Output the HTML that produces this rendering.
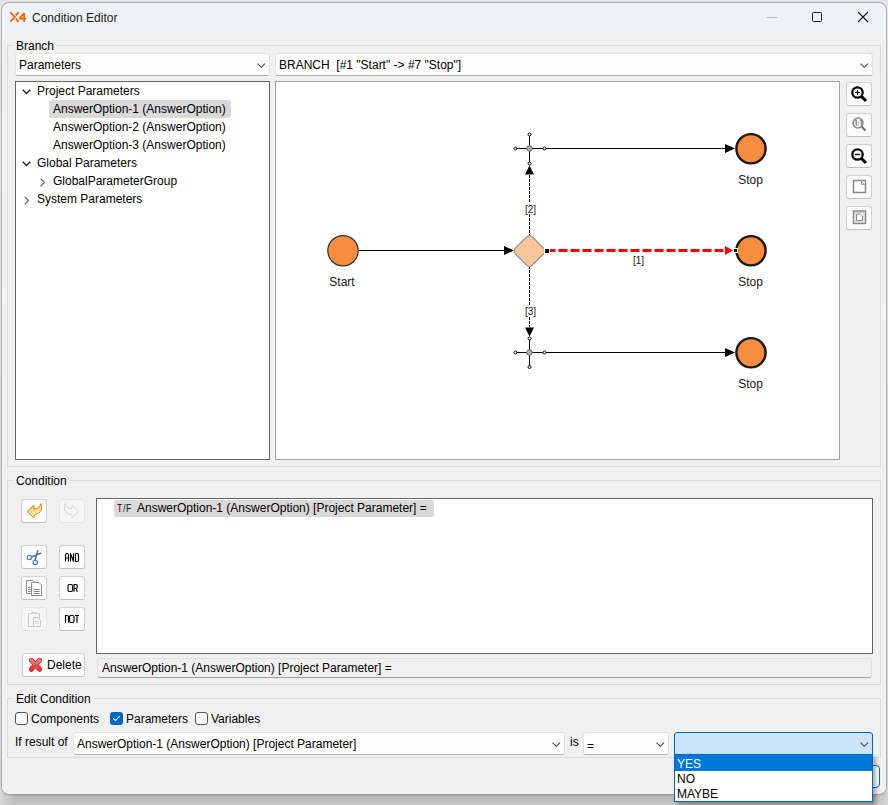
<!DOCTYPE html>
<html><head><meta charset="utf-8">
<style>
*{box-sizing:border-box;margin:0;padding:0}
html,body{width:888px;height:805px;overflow:hidden;background:linear-gradient(#e7e7e7 0,#e6e6e6 60px,#d6d6d6 760px);font-family:"Liberation Sans",sans-serif;font-size:12px;color:#000;position:relative}
.a{position:absolute}
.t{position:absolute;white-space:pre;line-height:14px;font-size:12px}
.grp{position:absolute;border:1px solid #dcdcdc}
.combo{position:absolute;background:#fdfdfd;border:1px solid #e2e2e2;border-bottom-color:#b0b0b0;border-radius:3px}
.chev{position:absolute}
.btn{position:absolute;background:#fdfdfd;border:1px solid #d0d0d0;border-bottom-color:#c0c0c0;border-radius:3px}
.btn.dis{background:#f6f6f6;border-color:#e4e4e4}
</style></head><body>
<!-- shadow & window -->
<div class="a" style="left:0;top:794px;width:888px;height:11px;background:linear-gradient(#a4a4a4,#b8b8b8 3px,#c0c0c0 8px,#c2c2c2)"></div>
<div class="a" style="left:0;top:794px;width:16px;height:11px;background:linear-gradient(90deg,#d6d6d6,rgba(214,214,214,0))"></div>
<div class="a" style="left:872px;top:794px;width:16px;height:11px;background:linear-gradient(90deg,rgba(214,214,214,0),#d6d6d6)"></div>
<div class="a" style="left:1px;top:2px;width:886px;height:793px;border:1px solid #acacac;border-bottom-color:#9a9a9a;border-radius:8px;background:#f0f0f0;overflow:hidden;box-shadow:inset 0 0 0 1px rgba(255,255,255,0.55)">
  <div class="a" style="left:1px;top:1px;width:882px;height:29px;background:#eef2f7"></div>
</div>
<!-- title -->
<svg class="a" style="left:0;top:0" width="40" height="30"><g fill="none" stroke="#f5600f" stroke-width="1.8"><path d="M10.3 12.3L15 17L10.3 21.7"/><path d="M18.6 12.3L15.8 15.4M15.8 18.6L18.6 21.7"/><path d="M24.2 21.9V13.2L19.5 18.6H26.2" stroke-linejoin="bevel"/></g></svg>
<div class="t" style="left:32px;top:11px;color:#1a1a1a">Condition Editor</div>
<div class="a" style="left:767px;top:17px;width:10px;height:1px;background:#b8b8b8"></div>
<div class="a" style="left:812px;top:12px;width:10px;height:10px;border:1px solid #1a1a1a;border-radius:1.5px"></div>
<svg class="a" style="left:857px;top:11px" width="12" height="12"><path d="M1 1L11 11M11 1L1 11" stroke="#1a1a1a" stroke-width="1.1"/></svg>

<!-- Branch group -->
<div class="grp" style="left:7px;top:45px;width:874px;height:422px"></div>
<div class="t" style="left:14px;top:39px;background:#f0f0f0;padding:0 2px">Branch</div>
<div class="combo" style="left:15px;top:53px;width:255px;height:23px"></div>
<div class="t" style="left:19px;top:58px">Parameters</div>
<svg class="chev" style="left:257px;top:62.5px" width="9" height="5"><path d="M0.6 0.6L4.3 4.3L8 0.6" fill="none" stroke="#4a4a4a" stroke-width="1.1"/></svg>
<div class="combo" style="left:275px;top:53px;width:598px;height:23px"></div>
<div class="t" style="left:279px;top:58px">BRANCH  [#1 "Start" -&gt; #7 "Stop"]</div>
<svg class="chev" style="left:860px;top:62.5px" width="9" height="5"><path d="M0.6 0.6L4.3 4.3L8 0.6" fill="none" stroke="#4a4a4a" stroke-width="1.1"/></svg>

<!-- tree -->
<div class="a" style="left:15px;top:81px;width:255px;height:379px;background:#fff;border:1px solid #646464"></div>
<div class="a" style="left:49px;top:100px;width:182px;height:18px;background:#d9d9d9;border-radius:3px"></div>
<svg class="a" style="left:22px;top:89px" width="9" height="6"><path d="M0.7 0.7L4.5 4.5L8.3 0.7" fill="none" stroke="#222" stroke-width="1.4"/></svg>
<div class="t" style="left:37px;top:84px">Project Parameters</div>
<div class="t" style="left:53px;top:102px">AnswerOption-1 (AnswerOption)</div>
<div class="t" style="left:53px;top:120px">AnswerOption-2 (AnswerOption)</div>
<div class="t" style="left:53px;top:138px">AnswerOption-3 (AnswerOption)</div>
<svg class="a" style="left:22px;top:161px" width="9" height="6"><path d="M0.7 0.7L4.5 4.5L8.3 0.7" fill="none" stroke="#222" stroke-width="1.4"/></svg>
<div class="t" style="left:37px;top:156px">Global Parameters</div>
<svg class="a" style="left:40px;top:178px" width="6" height="9"><path d="M0.6 0.6L4.5 4.5L0.6 8.4" fill="none" stroke="#666" stroke-width="1.2"/></svg>
<div class="t" style="left:53px;top:174px">GlobalParameterGroup</div>
<svg class="a" style="left:24px;top:196px" width="6" height="9"><path d="M0.6 0.6L4.5 4.5L0.6 8.4" fill="none" stroke="#666" stroke-width="1.2"/></svg>
<div class="t" style="left:37px;top:192px">System Parameters</div>

<!-- diagram -->
<div class="a" style="left:275px;top:81px;width:565px;height:379px;background:#fff;border:1px solid #a0a0a8"></div>


<!-- diagram svg -->
<svg class="a" style="left:0;top:0;z-index:5" width="888" height="805">
 <g fill="none" stroke="#000" stroke-width="1">
  <path d="M359 250.5H504"/>
  <path d="M515.5 148.5H725"/>
  <path d="M529.5 134.5V163.5"/>
  <path d="M515.5 352.5H725"/>
  <path d="M529.5 338.5V367"/>
  <path d="M529.5 175V202" stroke-dasharray="3 1"/>
  <path d="M529.5 214V236" stroke-dasharray="3 1"/>
  <path d="M529.5 266V305" stroke-dasharray="3 1"/>
  <path d="M529.5 317V327" stroke-dasharray="3 1"/>
 </g>
 <path d="M546.5 250.5H725" stroke="#f00" stroke-width="3" stroke-dasharray="9 3"/>
 <g fill="#000">
  <path d="M504 246L514 250.5L504 255Z"/>
  <path d="M725 144L735 148.5L725 153Z"/>
  <path d="M725 348L735 352.5L725 357Z"/>
  <path d="M525 174.5L529.5 165.5L534 174.5Z"/>
  <path d="M525 327.5L529.5 336.5L534 327.5Z"/>
   </g>
 <path d="M725 246L733 250.5L725 255Z" fill="#f00"/>
 <g fill="#fff" stroke="#000" stroke-width="1">
  <circle cx="529.5" cy="134.5" r="1.5"/><circle cx="515.5" cy="148.5" r="1.5"/><circle cx="544.5" cy="148.5" r="1.5"/><circle cx="529.5" cy="163.5" r="1.5"/>
  <circle cx="529.5" cy="338.5" r="1.5"/><circle cx="515.5" cy="352.5" r="1.5"/><circle cx="544.5" cy="352.5" r="1.5"/><circle cx="529.5" cy="367" r="1.5"/>
 </g>
 <g fill="#aaa" stroke="#666" stroke-width="1">
  <circle cx="529.5" cy="148.5" r="2.8"/><circle cx="529.5" cy="352.5" r="2.8"/>
 </g>
 <rect x="517.5" y="239" width="24" height="24" rx="4" transform="rotate(45 529.5 251)" fill="#f8c49a" stroke="#8c8c8c" stroke-width="1.1"/>
 <rect x="544.5" y="248.5" width="5" height="5" fill="#000" stroke="#fff" stroke-width="1"/>
 <circle cx="343" cy="250.75" r="15.2" fill="#f68d3f" stroke="#333" stroke-width="1.2"/>
 <g fill="#f68d3f" stroke="#1a1a1a" stroke-width="2.4">
  <circle cx="751" cy="148.75" r="14.6"/><circle cx="751" cy="250.75" r="14.6"/><circle cx="751" cy="352.75" r="14.6"/>
 </g>
 <rect x="733.5" y="248.5" width="4" height="4" fill="#000" stroke="#fff" stroke-width="1"/>
 <g font-family="Liberation Sans" font-size="12" fill="#1a1a1a" text-anchor="middle">
  <text x="342" y="285.5">Start</text>
  <text x="750.5" y="183.5">Stop</text>
  <text x="750.5" y="285.5">Stop</text>
  <text x="750.5" y="387.5">Stop</text>
 </g>
 <g font-family="Liberation Sans" font-size="10" fill="#222" text-anchor="middle">
  <text x="530.5" y="213">[2]</text>
  <text x="530.5" y="315">[3]</text>
  <text x="638.5" y="264">[1]</text>
 </g>
</svg>

<!-- zoom buttons -->
<div class="btn" style="left:846px;top:82px;width:26px;height:24px"></div>
<div class="btn" style="left:846px;top:113px;width:26px;height:24px"></div>
<div class="btn" style="left:846px;top:144px;width:26px;height:24px"></div>
<div class="btn" style="left:846px;top:175px;width:26px;height:24px"></div>
<div class="btn" style="left:846px;top:206px;width:26px;height:24px"></div>
<svg class="a" style="left:0;top:0;z-index:5" width="888" height="805">
 <g fill="none" stroke="#000">
  <circle cx="857.5" cy="92.5" r="5.2" stroke-width="2.2"/>
  <path d="M861.5 96.5L866 101" stroke-width="3"/>
  <path d="M855 92.5H860M857.5 90V95" stroke-width="1.2"/>
  <circle cx="857.5" cy="154.5" r="5.2" stroke-width="2.2"/>
  <path d="M861.5 158.5L866 163" stroke-width="3"/>
  <path d="M855 154.5H860" stroke-width="1.4"/>
 </g>
 <g fill="none" stroke="#8a8a8a">
  <circle cx="858" cy="123" r="5" stroke-width="1.5" fill="#f4f4f4"/>
  <path d="M861.8 126.8L865.5 130.5" stroke-width="2" stroke="#6a6a6a"/>
 </g>
 <path d="M855.2 121L856.2 120.3V125.8M860.3 121L861.3 120.3V125.8M858.2 121.5V122.5M858.2 124.3V125.3" fill="none" stroke="#7a7a7a" stroke-width="1.1"/>
 <g fill="none" stroke="#8a8a8a" stroke-width="1">
  <rect x="853.5" y="180.5" width="12" height="12" stroke-width="1.5"/>
  <path d="M861.5 181.5V184.5H864.5M861.5 181.5L864.5 184.5" stroke="#9a9a9a"/>
  <rect x="853.5" y="211" width="12" height="12.5" stroke-width="1.5"/>
  <rect x="855" y="212.5" width="9" height="9.5" stroke="#c8c8c8"/>
  <path d="M856.5 214H860.5L862.5 216V220.5H856.5Z" stroke="#8a8a8a"/>
 </g>
</svg>

<!-- Condition group -->
<div class="grp" style="left:7px;top:480px;width:874px;height:205px"></div>
<div class="t" style="left:14px;top:474px;background:#f0f0f0;padding:0 2px">Condition</div>
<div class="btn" style="left:21px;top:499px;width:26px;height:24px"></div>
<div class="btn dis" style="left:59px;top:499px;width:26px;height:24px"></div>
<div class="btn" style="left:21px;top:545px;width:26px;height:24px"></div>
<div class="btn" style="left:59px;top:545px;width:26px;height:24px"></div>
<div class="btn" style="left:21px;top:576px;width:26px;height:24px"></div>
<div class="btn" style="left:59px;top:576px;width:26px;height:24px"></div>
<div class="btn dis" style="left:21px;top:607px;width:26px;height:24px"></div>
<div class="btn" style="left:59px;top:607px;width:26px;height:24px"></div>
<svg class="a" style="left:0;top:0;z-index:5" width="888" height="805">
 <defs><linearGradient id="gold" x1="0" y1="0" x2="0.3" y2="1"><stop offset="0" stop-color="#eeb443"/><stop offset="0.6" stop-color="#f8dc8a"/><stop offset="1" stop-color="#fff2c4"/></linearGradient>
 <linearGradient id="redx" x1="0" y1="0" x2="0" y2="1"><stop offset="0" stop-color="#f47e80"/><stop offset="1" stop-color="#dc3338"/></linearGradient></defs>
 <path d="M27.2 511.5L33.8 505.2L34.4 509C37.6 509 40 506.5 40.8 503.6C42.6 507.5 42.2 513.2 34.6 514.6L33.8 517.6Z" fill="url(#gold)" stroke="#c08c2c" stroke-width="1" stroke-linejoin="round"/>
 <path d="M27.2 511.5L33.8 505.2L34.4 509C37.6 509 40 506.5 40.8 503.6C42.6 507.5 42.2 513.2 34.6 514.6L33.8 517.6Z" transform="translate(106 0) scale(-1 1)" fill="#f8f8f8" stroke="#d2d2d2" stroke-width="1" stroke-linejoin="round"/>
 <g stroke="#5d7590" stroke-width="1.6" stroke-linecap="round"><path d="M31 557.2L40.5 553.2M34.8 561L37.8 550.8"/></g>
 <g fill="#fff" stroke="#3b78bd" stroke-width="1.1"><circle cx="29.4" cy="557.4" r="2.2"/><circle cx="35.2" cy="562.4" r="2.2"/></g>
 <g fill="#fff" stroke="#8e8e8e" stroke-width="1">
  <path d="M26.5 580.5H33L35 582.5V593.5H26.5Z"/>
  <path d="M31.5 582.5H39L41.5 585V595.5H31.5Z"/>
  <path d="M33.5 589.5H39.8M33.5 591.5H39.8M33.5 593.5H39.8M28 587.5H31M28 589.5H31M28 591.5H31" stroke="#8e8e8e"/>
 </g>
 <g fill="#f6f6f6" stroke="#c8c8c8" stroke-width="1">
  <path d="M28.5 613.5H39.5V626.5H28.5Z"/>
  <path d="M31.5 613.5V612.5H36.5V613.5"/>
  <path d="M33.5 617.5H38L40.5 620V626.5H33.5Z"/>
  <path d="M36 621.5H38.5M36 623.5H38.5"/>
 </g>
 <g fill="none" stroke="#000" stroke-width="1.15">
  <path d="M65.5 561.5V555Q65.5 553.5 67 553.5Q68.5 553.5 68.5 555V561.5M65.5 558H68.5"/>
  <path d="M70.5 561.5V553.5L73.5 561.5V553.5"/>
  <path d="M75.5 553.5V561.5H77Q78.5 561.5 78.5 560V555Q78.5 553.5 77 553.5H75.5"/>
  <path d="M69.5 584.5H71Q72.5 584.5 72.5 586V590Q72.5 591.5 71 591.5H69.5Q68 591.5 68 590V586Q68 584.5 69.5 584.5Z"/>
  <path d="M74 591.8V584.5H76Q77.3 584.5 77.3 586V587Q77.3 588.3 76 588.3H74M76 588.3L77.3 591.8"/>
  <path d="M65.5 622.8V615.5H67Q68.5 615.5 68.5 617V622.8"/>
  <path d="M71 615.5H72.5Q74 615.5 74 617V621Q74 622.5 72.5 622.5H71Q69.5 622.5 69.5 621V617Q69.5 615.5 71 615.5Z"/>
  <path d="M75 615.5H79M77 615.5V622.8"/>
 </g>
 <g stroke-linecap="round"><path d="M31.3 660.3L39.7 669.3M39.7 660.3L31.3 669.3" stroke="#cf3035" stroke-width="5"/><path d="M31.3 660.3L39.7 669.3M39.7 660.3L31.3 669.3" stroke="url(#redx)" stroke-width="3.2"/></g>
 <path d="M113.3 718.3L115.5 720.5L119.8 716.2" fill="none" stroke="#fff" stroke-width="1.1"/>
</svg>
<div class="a" style="left:96px;top:498px;width:777px;height:156px;background:#fff;border:1px solid #646464"></div>
<div class="a" style="left:114px;top:500px;width:320px;height:17px;background:#d9d9d9;border-radius:2px"></div>
<div class="t" style="left:117px;top:501px;font-size:11px;letter-spacing:0.8px;transform:scaleX(0.8);transform-origin:0 0;color:#111">T/F</div>
<div class="t" style="left:137px;top:501px">AnswerOption-1 (AnswerOption) [Project Parameter] =</div>
<div class="btn" style="left:22px;top:653px;width:63px;height:24px"></div>
<div class="t" style="left:47px;top:658px">Delete</div>
<div class="a" style="left:97px;top:658px;width:775px;height:20px;background:#f0f0f0;border:1px solid #e0e0e0;border-bottom-color:#a0a0a0;border-radius:3px"></div>
<div class="t" style="left:102px;top:661px">AnswerOption-1 (AnswerOption) [Project Parameter] =</div>

<!-- Edit Condition group -->
<div class="grp" style="left:7px;top:698px;width:874px;height:60px"></div>
<div class="t" style="left:14px;top:692px;background:#f0f0f0;padding:0 2px">Edit Condition</div>
<div class="a" style="left:15px;top:712px;width:13px;height:13px;border:1px solid #555;border-radius:3px;background:#fbfbfb"></div>
<div class="t" style="left:31px;top:712px">Components</div>
<div class="a" style="left:110px;top:712px;width:13px;height:13px;border-radius:3px;background:#0067c0"></div>
<div class="t" style="left:126px;top:712px">Parameters</div>
<div class="a" style="left:195px;top:712px;width:13px;height:13px;border:1px solid #555;border-radius:3px;background:#fbfbfb"></div>
<div class="t" style="left:211px;top:712px">Variables</div>
<div class="t" style="left:15px;top:735px">If result of</div>
<div class="combo" style="left:73px;top:732px;width:492px;height:23px"></div>
<div class="t" style="left:77px;top:737px">AnswerOption-1 (AnswerOption) [Project Parameter]</div>
<svg class="chev" style="left:552px;top:742px" width="9" height="5"><path d="M0.6 0.6L4.3 4.3L8 0.6" fill="none" stroke="#4a4a4a" stroke-width="1.1"/></svg>
<div class="t" style="left:570px;top:735px">is</div>
<div class="combo" style="left:583px;top:732px;width:86px;height:23px"></div>
<div class="t" style="left:587px;top:739px">=</div>
<svg class="chev" style="left:656px;top:742px" width="9" height="5"><path d="M0.6 0.6L4.3 4.3L8 0.6" fill="none" stroke="#4a4a4a" stroke-width="1.1"/></svg>
<div class="a" style="left:674px;top:732px;width:199px;height:23px;background:#cce4f7;border:1px solid #0067c0;border-radius:3px 3px 0 0"></div>

<svg class="chev" style="left:860px;top:742px" width="9" height="5"><path d="M0.6 0.6L4.3 4.3L8 0.6" fill="none" stroke="#4a4a4a" stroke-width="1.1"/></svg>
<!-- hidden button -->
<div class="a" style="left:840px;top:765px;width:40px;height:23px;border:1.5px solid #0067c0;border-radius:4px;background:#fdfdfd"></div>
<!-- dropdown list -->
<div class="a" style="left:674px;top:754px;width:199px;height:48px;background:#fff;border:1px solid #0067c0;box-shadow:3px 3px 4px rgba(0,0,0,0.3)"></div>
<div class="a" style="left:675px;top:755px;width:197px;height:16px;background:#0078d7"></div>
<div class="t" style="left:677px;top:757px;color:#fff">YES</div>
<div class="t" style="left:677px;top:772px">NO</div>
<div class="t" style="left:677px;top:787px">MAYBE</div>
</body></html>
